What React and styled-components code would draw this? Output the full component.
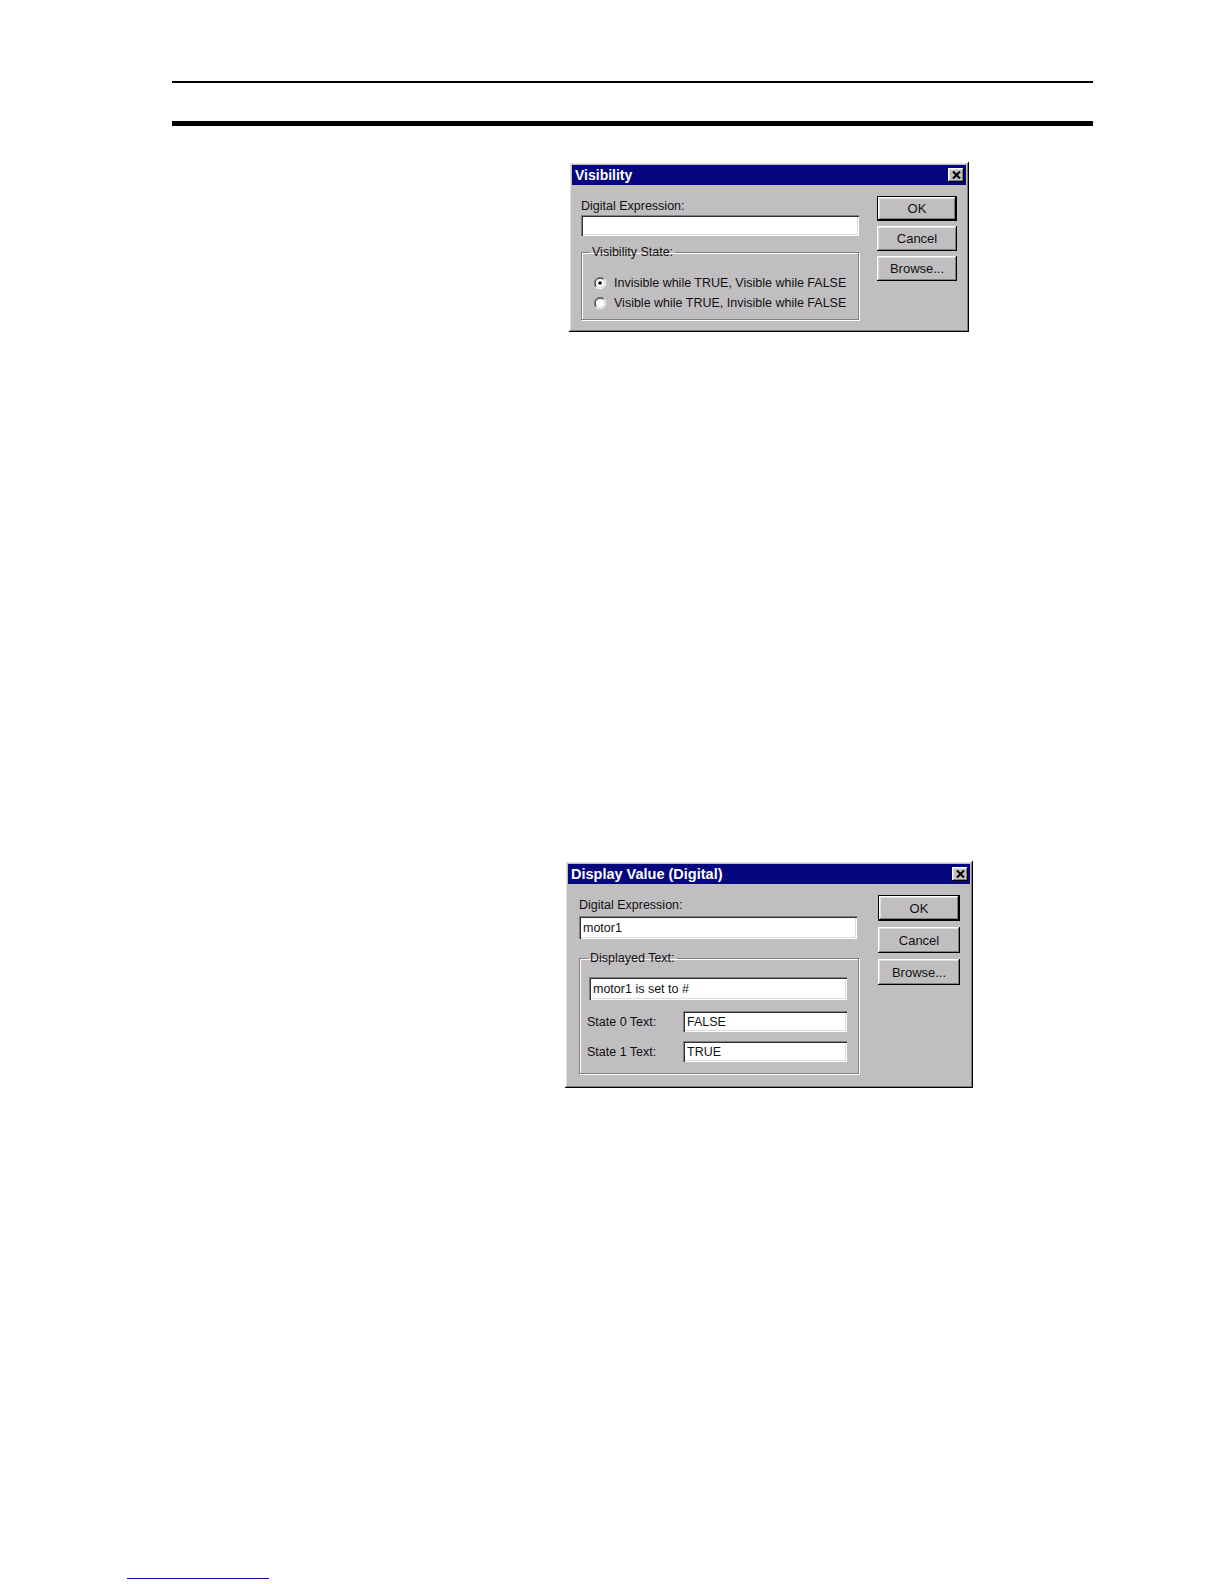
import React from 'react'
import styled, { createGlobalStyle, css } from 'styled-components'

const GlobalStyle = createGlobalStyle`
  html, body {
    margin: 0;
    padding: 0;
    background: #fff;
  }
  body {
    font-family: "Liberation Sans", Arial, sans-serif;
    color: #111;
  }
`

const raised = css`
  box-shadow: inset -1px -1px #000, inset 1px 1px #fff,
    inset -2px -2px #808080, inset 2px 2px #dfdfdf;
`

const sunken = css`
  box-shadow: inset 1px 1px #808080, inset 2px 2px #303030,
    inset -1px -1px #fff, inset -2px -2px #dcdcdc;
`

const CloseIcon = () => (
  <svg width="9" height="8" viewBox="0 0 9 8">
    <path d="M1 0.5 L8 7.5 M8 0.5 L1 7.5" stroke="#000" strokeWidth="2" />
  </svg>
)

const Radio = ({ checked }) => (
  <svg width="12" height="12" viewBox="0 0 12 12">
    <circle cx="6" cy="6" r="4.5" fill="#fff" />
    <path d="M1.76 10.24 A6 6 0 0 1 10.24 1.76" fill="none" stroke="#808080" />
    <path d="M10.24 1.76 A6 6 0 0 1 1.76 10.24" fill="none" stroke="#fff" />
    <path d="M2.47 9.53 A5 5 0 0 1 9.53 2.47" fill="none" stroke="#303030" />
    <path d="M9.53 2.47 A5 5 0 0 1 2.47 9.53" fill="none" stroke="#dcdcdc" />
    {checked && <circle cx="6" cy="6" r="1.8" fill="#000" />}
  </svg>
)

const Dialog = ({ title, width, height, titleSize, pad, mainWidth, gap, btnWidth, btnHeight, btnGap, children }) => (
  <Window $w={width} $h={height}>
    <TitleBar>
      <Title $size={titleSize}>{title}</Title>
      <CloseBox>
        <CloseIcon />
      </CloseBox>
    </TitleBar>
    <Body $pad={pad}>
      <MainCol $w={mainWidth}>{children}</MainCol>
      <ButtonCol $w={btnWidth} $ml={gap} $gap={btnGap}>
        <Button $h={btnHeight} $default>OK</Button>
        <Button $h={btnHeight}>Cancel</Button>
        <Button $h={btnHeight}>Browse...</Button>
      </ButtonCol>
    </Body>
  </Window>
)

export default function App() {
  return (
    <>
      <GlobalStyle />
      <Page>
        <HeaderRules>
          <Rule $h={2} />
          <Rule $h={5} />
        </HeaderRules>

        <Slot $top={36} $left={569}>
          <Dialog
            title="Visibility"
            width={400}
            height={170}
            titleSize={14}
            pad="11px 9px 8px 9px"
            mainWidth={278}
            gap={18}
            btnWidth={80}
            btnHeight={25}
            btnGap={5}
          >
            <Label $mb={1}>Digital Expression:</Label>
            <Field $h={21} />
            <Group $mt={9}>
              <Legend>Visibility State:</Legend>
              <RadioList>
                <RadioRow>
                  <Radio checked />
                  <span>Invisible while TRUE, Visible while FALSE</span>
                </RadioRow>
                <RadioRow>
                  <Radio />
                  <span>Visible while TRUE, Invisible while FALSE</span>
                </RadioRow>
              </RadioList>
            </Group>
          </Dialog>
        </Slot>

        <Slot $top={529} $left={565}>
          <Dialog
            title="Display Value (Digital)"
            width={408}
            height={227}
            titleSize={14.5}
            pad="11px 10px 10px 11px"
            mainWidth={280}
            gap={19}
            btnWidth={82}
            btnHeight={26}
            btnGap={6}
          >
            <Label $mb={3}>Digital Expression:</Label>
            <Field $h={23} $w={278}>motor1</Field>
            <Group $mt={12}>
              <Legend>Displayed Text:</Legend>
              <TextBlock>
                <Field $h={23}>motor1 is set to #</Field>
                <StateRow $mt={11}>
                  <StateLabel>State 0 Text:</StateLabel>
                  <Field $h={21}>FALSE</Field>
                </StateRow>
                <StateRow $mt={9}>
                  <StateLabel>State 1 Text:</StateLabel>
                  <Field $h={21}>TRUE</Field>
                </StateRow>
              </TextBlock>
            </Group>
          </Dialog>
        </Slot>

        <FooterRule />
      </Page>
    </>
  )
}

const Page = styled.div`
  width: 1224px;
  height: 1584px;
  overflow: hidden;
  display: flex;
  flex-direction: column;
  align-items: flex-start;
`

const HeaderRules = styled.div`
  margin: 81px 0 0 172px;
  width: 921px;
  display: flex;
  flex-direction: column;
  gap: 38px;
`

const Rule = styled.div`
  height: ${p => p.$h}px;
  background: #000;
`

const Slot = styled.div`
  margin: ${p => p.$top}px 0 0 ${p => p.$left}px;
`

const Window = styled.div`
  box-sizing: border-box;
  width: ${p => p.$w}px;
  height: ${p => p.$h}px;
  padding: 3px;
  background: #c1bec1;
  display: flex;
  flex-direction: column;
  ${raised};
`

const TitleBar = styled.div`
  height: 20px;
  flex-shrink: 0;
  background: #06067e;
  display: flex;
  align-items: center;
  justify-content: space-between;
  padding: 0 2px 0 3px;
`

const Title = styled.span`
  color: #fff;
  font-weight: 700;
  font-size: ${p => p.$size}px;
  line-height: 18px;
`

const CloseBox = styled.div`
  width: 16px;
  height: 14px;
  background: #c1bec1;
  display: flex;
  align-items: center;
  justify-content: center;
  ${raised};
`

const Body = styled.div`
  flex: 1;
  display: flex;
  align-items: flex-start;
  padding: ${p => p.$pad};
`

const MainCol = styled.div`
  width: ${p => p.$w}px;
  padding-top: 3px;
  display: flex;
  flex-direction: column;
  align-items: stretch;
`

const ButtonCol = styled.div`
  width: ${p => p.$w}px;
  margin-left: ${p => p.$ml}px;
  display: flex;
  flex-direction: column;
  gap: ${p => p.$gap}px;
`

const Button = styled.div`
  box-sizing: border-box;
  height: ${p => p.$h}px;
  display: flex;
  align-items: center;
  justify-content: center;
  font-size: 13px;
  color: #111;
  ${raised};
  ${p => p.$default && css`
    border: 1px solid #000;
  `}
`

const Label = styled.div`
  font-size: 12.5px;
  line-height: 15px;
  margin-bottom: ${p => p.$mb}px;
`

const Field = styled.div`
  box-sizing: border-box;
  height: ${p => p.$h}px;
  ${p => p.$w && css`width: ${p.$w}px;`}
  background: #fff;
  display: flex;
  align-items: center;
  padding: 1px 0 0 4px;
  font-size: 12.5px;
  color: #111;
  ${sunken};
`

const Group = styled.fieldset`
  margin: ${p => p.$mt}px 0 0 0;
  padding: 0;
  min-width: 0;
  border: 1px solid #808080;
  box-shadow: inset 1px 1px #fff, 1px 1px #fff;
`

const Legend = styled.legend`
  margin-left: 8px;
  padding: 0 2px;
  font-size: 12.5px;
  line-height: 15px;
`

const RadioList = styled.div`
  padding: 13px 0 6px 12px;
  display: flex;
  flex-direction: column;
`

const RadioRow = styled.div`
  height: 20px;
  display: flex;
  align-items: center;
  gap: 8px;
  font-size: 12.5px;

  svg {
    flex-shrink: 0;
  }
`

const TextBlock = styled.div`
  padding: 11px 11px 11px 9px;
  display: flex;
  flex-direction: column;
`

const StateRow = styled.div`
  margin-top: ${p => p.$mt}px;
  display: grid;
  grid-template-columns: 94px 1fr;
  align-items: center;
`

const StateLabel = styled.span`
  font-size: 12.5px;
  margin-left: -2px;
`

const FooterRule = styled.div`
  margin: 490px 0 0 127px;
  width: 142px;
  height: 1px;
  background: #10108a;
`
